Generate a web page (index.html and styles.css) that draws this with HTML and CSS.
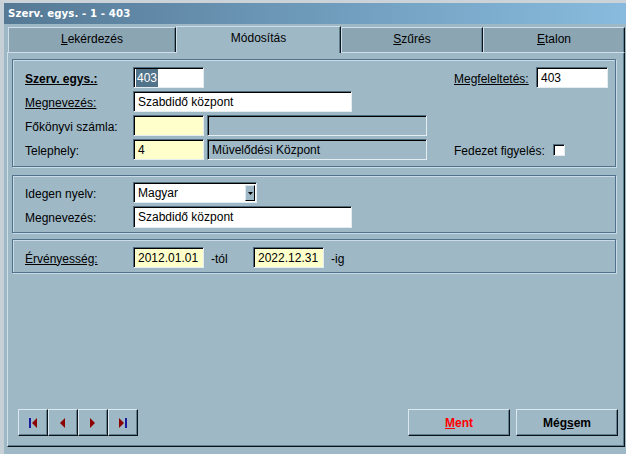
FILE: index.html
```html
<!DOCTYPE html>
<html lang="hu">
<head>
<meta charset="utf-8">
<title>Szerv. egys. - 1 - 403</title>
<link rel="stylesheet" href="styles.css">
</head>
<body>
<div class="window">
  <div class="titlebar">Szerv. egys. - 1 - 403</div>
  <div class="client">
    <div class="tabs">
      <div class="tab t1"><u>L</u>ekérdezés</div>
      <div class="tab t2 active">Módosítás</div>
      <div class="tab t3"><u>S</u>zűrés</div>
      <div class="tab t4"><u>E</u>talon</div>
    </div>
    <div class="page">
      <div class="group g1">
        <div class="row">
          <span class="label bold"><u>Szerv. egys.:</u></span>
          <span class="field white w-short"><span class="sel">403</span></span>
          <span class="right">
            <span class="label rlabel"><u>Megfeleltetés:</u></span>
            <span class="field white w-meg">403</span>
          </span>
        </div>
        <div class="row">
          <span class="label"><u>Megnevezés:</u></span>
          <span class="field white w-long">Szabdidő központ</span>
        </div>
        <div class="row">
          <span class="label">Főkönyvi számla:</span>
          <span class="field yellow w-short"></span>
          <span class="field gray w-desc"></span>
        </div>
        <div class="row">
          <span class="label">Telephely:</span>
          <span class="field yellow w-short">4</span>
          <span class="field gray w-desc">Müvelődési Központ</span>
          <span class="right">
            <span class="label flabel">Fedezet figyelés:</span>
            <span class="checkbox"></span>
          </span>
        </div>
      </div>

      <div class="group g2">
        <div class="row">
          <span class="label">Idegen nyelv:</span>
          <span class="field white w-select">Magyar
            <span class="dropbtn"><svg width="5" height="3" viewBox="0 0 5 3"><path d="M0 0H5L2.5 3Z" fill="#000"/></svg></span>
          </span>
        </div>
        <div class="row r2">
          <span class="label">Megnevezés:</span>
          <span class="field white w-long h22">Szabdidő központ</span>
        </div>
      </div>

      <div class="group g3">
        <div class="row">
          <span class="label"><u>Érvényesség:</u></span>
          <span class="field yellow w-short">2012.01.01</span>
          <span class="suffix tol">-tól</span>
          <span class="field yellow w-short">2022.12.31</span>
          <span class="suffix">-ig</span>
        </div>
      </div>

      <div class="footer">
        <div class="nav">
          <button class="btn navbtn" type="button" aria-label="Első">
            <svg width="9" height="10" viewBox="0 0 9 10"><rect x="0" y="0" width="2" height="10" fill="#1a1aa0"/><path d="M8 0V10L3 5Z" fill="#8c0000"/></svg>
          </button>
          <button class="btn navbtn" type="button" aria-label="Előző">
            <svg width="6" height="10" viewBox="0 0 6 10"><path d="M5 0V10L0 5Z" fill="#8c0000"/></svg>
          </button>
          <button class="btn navbtn" type="button" aria-label="Következő">
            <svg width="6" height="10" viewBox="0 0 6 10"><path d="M0 0V10L5 5Z" fill="#8c0000"/></svg>
          </button>
          <button class="btn navbtn" type="button" aria-label="Utolsó">
            <svg width="9" height="10" viewBox="0 0 9 10"><path d="M0 0V10L5 5Z" fill="#8c0000"/><rect x="6" y="0" width="2" height="10" fill="#1a1aa0"/></svg>
          </button>
        </div>
        <div class="actions">
          <button class="btn textbtn save" type="button"><u>M</u>ent</button>
          <button class="btn textbtn" type="button">Még<u>s</u>em</button>
        </div>
      </div>
    </div>
  </div>
</div>
</body>
</html>
```
FILE: styles.css
```css
* { box-sizing: border-box; }

html, body {
  margin: 0;
  padding: 0;
  background: #ffffff;
}

body {
  font-family: "Liberation Sans", Arial, sans-serif;
  font-size: 12px;
  color: #000;
}

.window {
  width: 626px;
  height: 454px;
  border-top: 3px solid #cbd3d9;
  border-left: 4px solid #c7d0d7;
  background: #9eb8c6;
  display: flex;
  flex-direction: column;
}

.titlebar {
  height: 21px;
  line-height: 21px;
  padding-left: 4px;
  background: linear-gradient(to right, #557995, #6f9bbb 50%, #88bbdd);
  color: #fff;
  font-family: "DejaVu Sans", Verdana, sans-serif;
  font-weight: bold;
  font-size: 10.2px;
  letter-spacing: 0.1px;
}

.client {
  flex: 1;
  padding: 2px 1px 7px 3px;
  display: flex;
  flex-direction: column;
}

.tabs {
  display: flex;
  align-items: flex-end;
  height: 26px;
  margin-left: 1px;
}

.tab {
  height: 25px;
  background: #8ba5b3;
  border-top: 1px solid #cfdfe9;
  border-left: 1px solid #cfdfe9;
  border-right: 1px solid #0d1419;
  box-shadow: inset -1px 0 0 #5f7e90;
  text-align: center;
  line-height: 23px;
  font-size: 12px;
}

.t1 { width: 168px; }
.t2 { width: 165px; }
.t3 { width: 142px; }
.t4 { width: 142px; }

.tab.active {
  height: 27px;
  background: #9eb8c6;
  margin-bottom: -1px;
  position: relative;
  z-index: 1;
  border-left: 1px solid #cfdfe9;
  line-height: 22px;
  border-right: 1px solid #0d1419;
}

.page {
  flex: 1;
  border-top: 1px solid #cfdfe9;
  border-left: 1px solid #cfdfe9;
  border-right: 1px solid #0d1419;
  border-bottom: 1px solid #0d1419;
  box-shadow: inset -1px -1px 0 #5f7e90;
  padding: 6px 8px 10px 4px;
  display: flex;
  flex-direction: column;
}

.group {
  border: 1px solid #50738b;
  box-shadow: inset 1px 1px 0 #c9dbe6, 1px 1px 0 #c9dbe6;
  padding: 7px 7px 0 12px;
  display: flex;
  flex-direction: column;
  gap: 3px;
}

.g1 { height: 108px; }
.g2 { height: 58px; margin-top: 8px; padding-top: 6px; }
.g3 { height: 34px; margin-top: 6px; padding-top: 7px; }

.row {
  display: flex;
  align-items: center;
  height: 21px;
}

.label {
  width: 108px;
  flex: none;
  white-space: nowrap;
  padding-top: 2px;
}

.bold { font-weight: bold; }

.field {
  height: 21px;
  flex: none;
  border-top: 1px solid #4d6b7c;
  border-left: 1px solid #4d6b7c;
  border-right: 1px solid #e4edf2;
  border-bottom: 1px solid #e4edf2;
  box-shadow: inset 1px 1px 0 #000;
  padding: 0 3px 0 4px;
  line-height: 20px;
  white-space: nowrap;
  position: relative;
}

.h22 { height: 22px; }

.white { background: #ffffff; }
.yellow { background: #ffffcc; }
.gray { background: #9eb8c6; }

.w-short { width: 71px; }
.w-meg { width: 72px; }
.w-long { width: 219px; }
.w-desc { width: 220px; margin-left: 3px; }
.w-select { width: 124px; }

.sel {
  display: inline-block;
  background: #52748b;
  color: #fff;
  line-height: 18px;
  margin-left: -2px;
  padding: 0 1px;
}

.right {
  margin-left: auto;
  width: 154px;
  display: flex;
  align-items: center;
}

.rlabel { width: 82px; }
.flabel { width: 99px; }

.checkbox {
  width: 12px;
  height: 12px;
  background: #fff;
  border-top: 1px solid #4d6b7c;
  border-left: 1px solid #4d6b7c;
  border-right: 1px solid #e4edf2;
  border-bottom: 1px solid #e4edf2;
  box-shadow: inset 1px 1px 0 #000;
  margin-top: 1px;
}

.dropbtn {
  position: absolute;
  right: 1px;
  top: 2px;
  width: 10px;
  height: 16px;
  background: #9eb8c6;
  border-top: 1px solid #dce8ef;
  border-left: 1px solid #dce8ef;
  border-right: 1px solid #000;
  border-bottom: 1px solid #000;
  display: flex;
  align-items: center;
  justify-content: center;
}

.suffix { padding: 2px 0 0 7px; width: 49px; flex: none; }
.suffix.tol { width: 49px; }

.footer {
  margin-top: auto;
  display: flex;
  justify-content: space-between;
  align-items: center;
  margin-right: -2px;
}

.nav {
  display: flex;
  margin-left: 6px;
}

.btn {
  font-family: "Liberation Sans", Arial, sans-serif;
  height: 27px;
  background: #9eb8c6;
  border-top: 1px solid #dce8ef;
  border-left: 1px solid #dce8ef;
  border-right: 1px solid #0d1419;
  border-bottom: 1px solid #0d1419;
  box-shadow: inset -1px -1px 0 #5f7e90;
  padding: 0;
  margin: 0;
  display: flex;
  align-items: center;
  justify-content: center;
}

.navbtn { width: 30px; }

.actions {
  display: flex;
  gap: 6px;
}

.textbtn {
  width: 102px;
  font-weight: bold;
  font-size: 12px;
  color: #000;
}

.save { color: #ff0000; }
```
